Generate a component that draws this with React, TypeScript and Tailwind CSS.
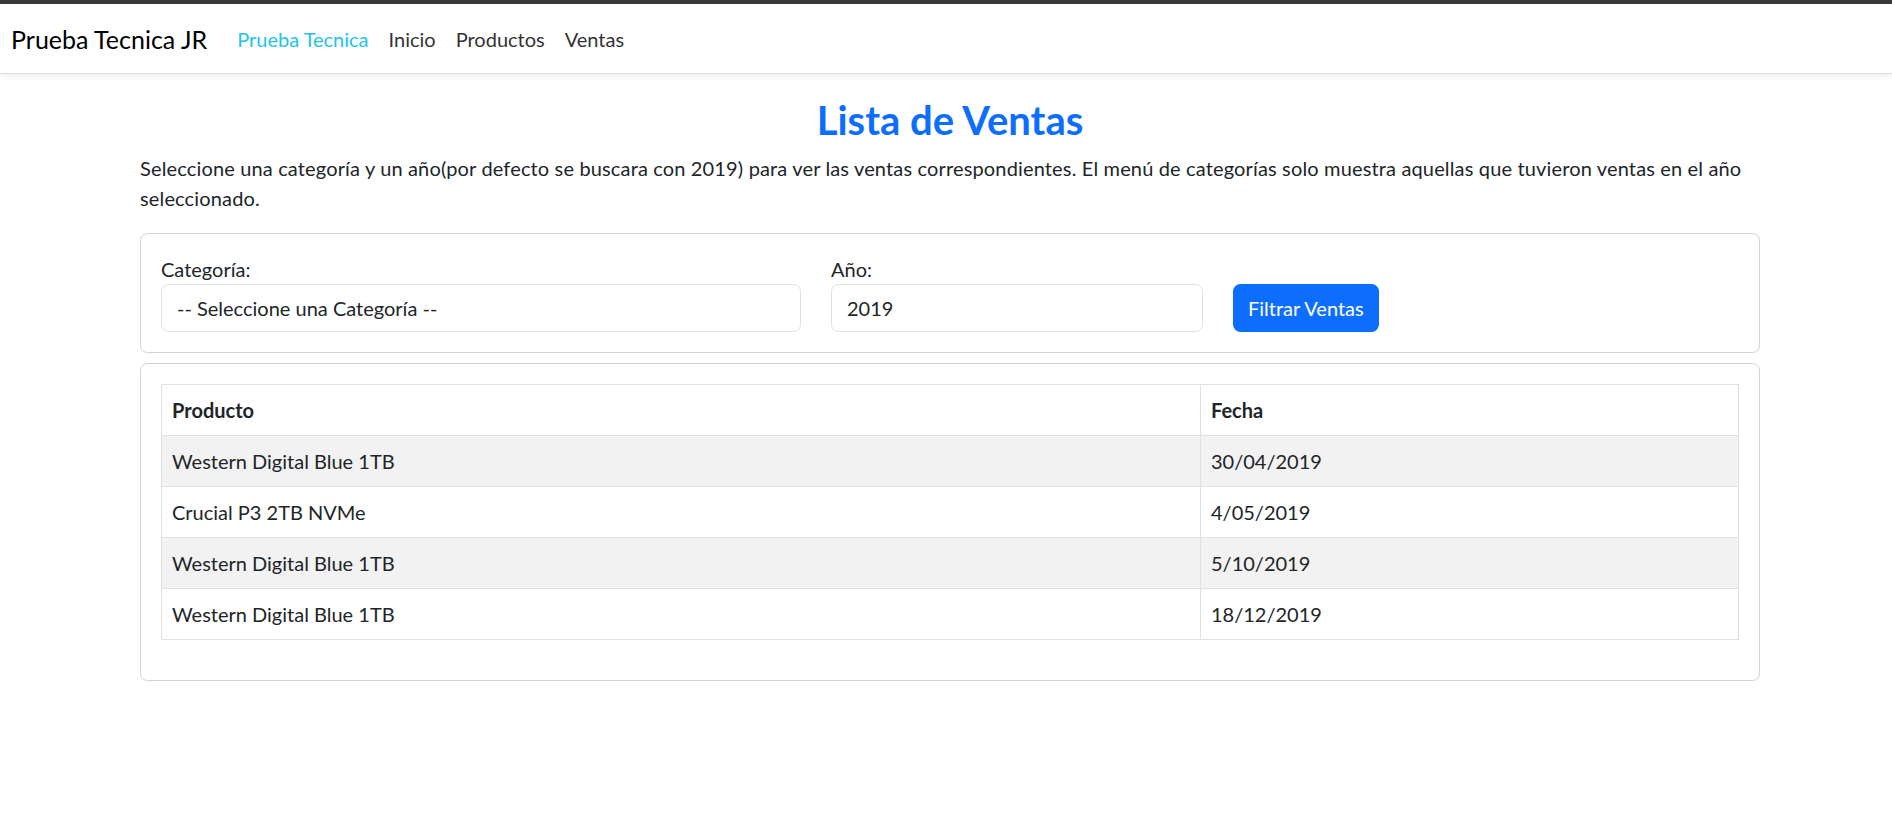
const rows = [
  { producto: "Western Digital Blue 1TB", fecha: "30/04/2019" },
  { producto: "Crucial P3 2TB NVMe", fecha: "4/05/2019" },
  { producto: "Western Digital Blue 1TB", fecha: "5/10/2019" },
  { producto: "Western Digital Blue 1TB", fecha: "18/12/2019" },
];

function Navbar() {
  return (
    <nav className="flex h-[70px] items-center border-b border-[#dcdcdc] bg-white pl-[11px] shadow-[0_2px_8px_rgba(0,0,0,0.08)]">
      <span className="mr-[20px] text-[25px] leading-[30px] text-black">Prueba Tecnica JR</span>
      <a className="px-[10px] text-[20px] text-[#22c3eb]">Prueba Tecnica</a>
      <a className="px-[10px] text-[20px] text-[#333333]">Inicio</a>
      <a className="px-[10px] text-[20px] text-[#333333]">Productos</a>
      <a className="px-[10px] text-[20px] text-[#333333]">Ventas</a>
    </nav>
  );
}

function Filters() {
  return (
    <div className="rounded-[7.5px] border border-[#d2d2d2] p-[20px]">
      <div className="flex items-end">
        <div className="w-[640px]">
          <label className="block text-[20px] leading-[30px]">Categoría:</label>
          <div className="flex h-[47.5px] items-center rounded-[7.5px] border border-[#dee2e6] px-[15px] text-[20px]">
            -- Seleccione una Categoría --
          </div>
        </div>
        <div className="ml-[30px] w-[372px]">
          <label className="block text-[20px] leading-[30px]">Año:</label>
          <div className="flex h-[47.5px] items-center rounded-[7.5px] border border-[#dee2e6] px-[15px] text-[20px]">
            2019
          </div>
        </div>
        <button className="ml-[30px] h-[47.5px] rounded-[7.5px] bg-[#0d6efd] px-[15px] text-[20px] text-white">
          Filtrar Ventas
        </button>
      </div>
    </div>
  );
}

function SalesTable() {
  return (
    <div className="mt-[10px] rounded-[7.5px] border border-[#d2d2d2] p-[20px]">
      <table className="mb-[20px] w-full border-collapse text-[20px]">
        <thead>
          <tr>
            <th className="h-[51px] w-[1039px] border border-[#dee2e6] px-[10px] text-left font-bold">Producto</th>
            <th className="h-[51px] border border-[#dee2e6] px-[10px] text-left font-bold">Fecha</th>
          </tr>
        </thead>
        <tbody>
          {rows.map((r, i) => (
            <tr key={i} className={i % 2 === 0 ? "bg-[#f2f2f2]" : "bg-white"}>
              <td className="h-[51px] border border-[#dee2e6] px-[10px]">{r.producto}</td>
              <td className="h-[51px] border border-[#dee2e6] px-[10px]">{r.fecha}</td>
            </tr>
          ))}
        </tbody>
      </table>
    </div>
  );
}

export default function App() {
  return (
    <div className="min-h-screen bg-white text-[#212529] [font-family:Lato,sans-serif]">
      <div className="h-[4px] bg-[#3a3a3a]" />
      <Navbar />
      <div className="pl-[8px]">
        <main className="mx-auto w-[1650px] px-[15px]">
          <h2 className="mt-[22px] mb-[9px] text-center text-[40px] leading-[48px] font-bold text-[#0d6efd]">
            Lista de Ventas
          </h2>
          <p className="mb-[20px] text-[20px] leading-[30px] tracking-[0.15px]">
            Seleccione una categoría y un año(por defecto se buscara con 2019) para ver las ventas correspondientes. El
            menú de categorías solo muestra aquellas que tuvieron ventas en el año seleccionado.
          </p>
          <Filters />
          <SalesTable />
        </main>
      </div>
    </div>
  );
}
